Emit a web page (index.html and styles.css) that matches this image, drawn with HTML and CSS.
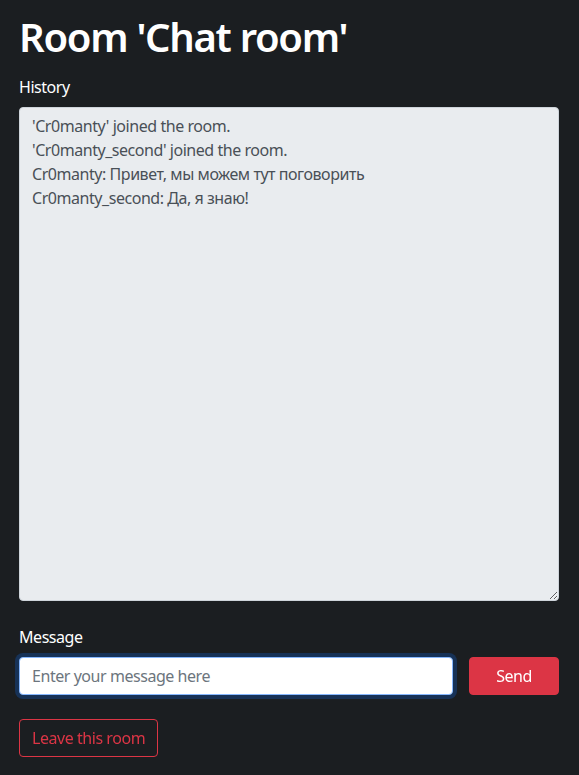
FILE: index.html
```html
<!DOCTYPE html>
<html lang="en">
<head>
<meta charset="utf-8">
<title>Room 'Chat room'</title>
<link rel="stylesheet" href="styles.css">
</head>
<body>
<main class="container">
  <h1 class="title">Room 'Chat room'</h1>
  <label class="label" for="history">History</label>
  <textarea id="history" class="history" readonly>'Cr0manty' joined the room.
'Cr0manty_second' joined the room.
Cr0manty: Привет, мы можем тут поговорить
Cr0manty_second: Да, я знаю!</textarea>
  <label class="label" for="msg">Message</label>
  <div class="send-row">
    <input id="msg" class="input" type="text" placeholder="Enter your message here" autofocus>
    <button class="btn btn-send" type="button">Send</button>
  </div>
  <button class="btn btn-leave" type="button">Leave this room</button>
</main>
</body>
</html>
```
FILE: styles.css
```css
html, body {
  margin: 0;
  padding: 0;
  background: #1b1e21;
}
body {
  font-family: "Noto Sans", "Open Sans", sans-serif;
  font-size: 16px;
  line-height: 1.5;
  letter-spacing: -0.45px;
  color: #fff;
}
.container {
  width: 540px;
  padding: 13px 0 0 19px;
  display: flex;
  flex-direction: column;
  align-items: flex-start;
}
.title {
  margin: 0 0 14px;
  font-size: 40px;
  font-weight: 600;
  line-height: 1.2;
  letter-spacing: -1.3px;
}
.label {
  display: block;
  margin-bottom: 8px;
  font-size: 16px;
}
.history {
  box-sizing: border-box;
  width: 540px;
  height: 494px;
  margin: 0 0 24px;
  padding: 6px 12px;
  border: 1px solid #ced4da;
  border-radius: 4px;
  background: #e9ecef;
  color: #495057;
  font: inherit;
  letter-spacing: inherit;
  line-height: 1.5;
  outline: none;
  resize: vertical;
}
.send-row {
  display: flex;
  gap: 16px;
  width: 540px;
  margin-bottom: 24px;
}
.input {
  box-sizing: border-box;
  flex: 1;
  height: 38px;
  padding: 6px 12px;
  border: 1px solid #86b7fe;
  border-radius: 4px;
  background: #fff;
  color: #212529;
  font: inherit;
  letter-spacing: inherit;
  outline: none;
  box-shadow: 0 0 0 4px rgba(13, 110, 253, 0.25);
}
.input::placeholder {
  color: #6c757d;
}
.btn {
  box-sizing: border-box;
  height: 38px;
  padding: 6px 12px;
  border-radius: 4px;
  font: inherit;
  letter-spacing: inherit;
  cursor: pointer;
}
.btn-send {
  width: 90px;
  border: 1px solid #dc3545;
  background: #dc3545;
  color: #fff;
}
.btn-leave {
  border: 1px solid #dc3545;
  background: transparent;
  color: #dc3545;
}
```
